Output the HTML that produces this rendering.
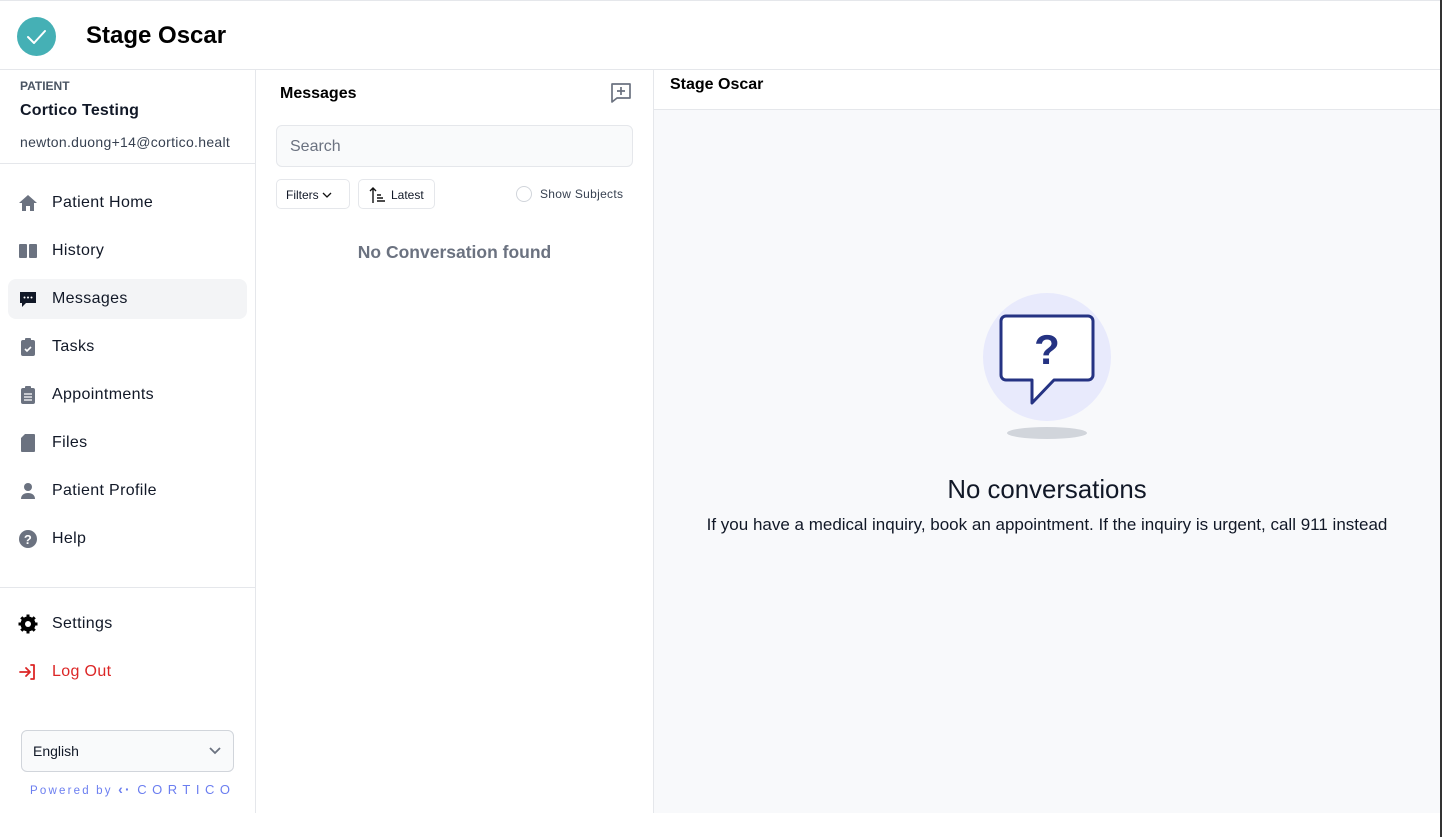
<!DOCTYPE html>
<html><head><meta charset="utf-8"><style>
*{box-sizing:border-box;margin:0;padding:0}
body{width:1442px;height:837px;background:#fff;font-family:"Liberation Sans",Arial,sans-serif;color:#111827;position:relative;overflow:hidden}
.top{position:absolute;left:0;top:0;width:1440px;height:70px;border-top:1px solid #e5e7eb;border-bottom:1px solid #e5e7eb}
.logo{position:absolute;left:17px;top:16px;width:39px;height:39px;border-radius:50%;background:#45b0b5}
.title{position:absolute;left:86px;top:21px;font-size:24px;font-weight:bold;color:#000}
.side{position:absolute;left:0;top:70px;width:256px;height:743px;border-right:1px solid #e5e7eb}
.nav{position:absolute;left:8px;width:239px;height:40px;border-radius:8px;display:flex;align-items:center;font-size:16px;letter-spacing:0.35px;color:#111827}
.nav svg{position:absolute;left:10px}
.nav span{position:absolute;left:44px;top:11px}
.mid{position:absolute;left:256px;top:70px;width:398px;height:743px;border-right:1px solid #e5e7eb}
.right{position:absolute;left:654px;top:70px;width:786px;height:743px;background:#f8f9fb}
.strip{position:absolute;left:1440px;top:0;width:2px;height:837px;background:#333}
</style></head><body>
<div class="top">
<div class="logo"><svg width="39" height="39" viewBox="0 0 39 39"><path d="M11 20l6 6 11-12" stroke="#fff" stroke-width="2" fill="none" stroke-linecap="round" stroke-linejoin="round"/></svg></div>
<div class="title">Stage Oscar</div>
</div>
<div class="side">
<div style="position:absolute;left:20px;top:9px;font-size:12px;font-weight:bold;color:#4b5563">PATIENT</div>
<div style="position:absolute;left:20px;top:32px;font-size:16px;font-weight:bold;letter-spacing:0.2px">Cortico Testing</div>
<div style="position:absolute;left:20px;top:64px;font-size:14px;color:#374151;white-space:nowrap;letter-spacing:0.3px">newton.duong+14@cortico.healt</div>
<div style="position:absolute;left:0;top:93px;width:255px;border-top:1px solid #e5e7eb"></div>
<div class="nav" style="top:113px"><svg width="20" height="20" viewBox="0 0 20 20"><path d="M10 2L1 10h3v8h4v-5h4v5h4v-8h3z" fill="#6b7280"/></svg><span>Patient Home</span></div>
<div class="nav" style="top:161px"><svg width="20" height="20" viewBox="0 0 20 20"><rect x="1" y="3" width="8" height="14" rx="1" fill="#6b7280"/><rect x="11" y="3" width="8" height="14" rx="1" fill="#6b7280"/></svg><span>History</span></div>
<div class="nav" style="top:209px;background:#f3f4f6"><svg width="20" height="20" viewBox="0 0 20 20"><path d="M2 3h16v11H8l-4 4v-4H2z" fill="#111827"/><circle cx="6.5" cy="8.5" r="1" fill="#fff"/><circle cx="10" cy="8.5" r="1" fill="#fff"/><circle cx="13.5" cy="8.5" r="1" fill="#fff"/></svg><span>Messages</span></div>
<div class="nav" style="top:257px"><svg width="20" height="20" viewBox="0 0 20 20"><rect x="3" y="3" width="14" height="16" rx="2" fill="#6b7280"/><rect x="7" y="1" width="6" height="4" rx="1" fill="#6b7280"/><path d="M7 12l2 2 4-4" stroke="#fff" stroke-width="1.6" fill="none"/></svg><span>Tasks</span></div>
<div class="nav" style="top:305px"><svg width="20" height="20" viewBox="0 0 20 20"><rect x="3" y="3" width="14" height="16" rx="2" fill="#6b7280"/><rect x="7" y="1" width="6" height="4" rx="1" fill="#6b7280"/><path d="M6 9h8M6 12h8M6 15h8" stroke="#fff" stroke-width="1.3"/></svg><span>Appointments</span></div>
<div class="nav" style="top:353px"><svg width="20" height="20" viewBox="0 0 20 20"><path d="M7 1h9a1 1 0 011 1v16a1 1 0 01-1 1H4a1 1 0 01-1-1V5z" fill="#6b7280"/></svg><span>Files</span></div>
<div class="nav" style="top:401px"><svg width="20" height="20" viewBox="0 0 20 20"><circle cx="10" cy="6" r="4" fill="#6b7280"/><path d="M3 18c0-4 3-6 7-6s7 2 7 6z" fill="#6b7280"/></svg><span>Patient Profile</span></div>
<div class="nav" style="top:449px"><svg width="20" height="20" viewBox="0 0 20 20"><circle cx="10" cy="10" r="9" fill="#6b7280"/><text x="10" y="15" font-size="13" font-weight="bold" fill="#fff" text-anchor="middle" font-family="Liberation Sans">?</text></svg><span>Help</span></div>
<div style="position:absolute;left:0;top:517px;width:255px;border-top:1px solid #e5e7eb"></div>
<div class="nav" style="top:534px"><svg width="20" height="20" viewBox="0 0 20 20"><circle cx="10" cy="10" r="7.5" fill="#000"/><g fill="#000"><rect x="8.5" y="0.5" width="3" height="4"/><rect x="8.5" y="15.5" width="3" height="4"/><rect x="0.5" y="8.5" width="4" height="3"/><rect x="15.5" y="8.5" width="4" height="3"/><rect x="8.5" y="0.5" width="3" height="4" transform="rotate(45 10 10)"/><rect x="8.5" y="15.5" width="3" height="4" transform="rotate(45 10 10)"/><rect x="0.5" y="8.5" width="4" height="3" transform="rotate(45 10 10)"/><rect x="15.5" y="8.5" width="4" height="3" transform="rotate(45 10 10)"/></g><circle cx="10" cy="10" r="3" fill="#fff"/></svg><span>Settings</span></div>
<div class="nav" style="top:582px;color:#dc2626"><svg width="20" height="20" viewBox="0 0 20 20"><path d="M2 10h10M8 6l4 4-4 4M13 3h3v14h-3" stroke="#dc2626" stroke-width="1.8" fill="none" stroke-linecap="round" stroke-linejoin="round"/></svg><span>Log Out</span></div>
<div style="position:absolute;left:21px;top:660px;width:213px;height:42px;border:1px solid #d1d5db;border-radius:6px;background:#f9fafb;font-size:14px;padding:12px 0 0 11px">English<svg style="position:absolute;right:12px;top:16px" width="12" height="8" viewBox="0 0 12 8"><path d="M1 1l5 5 5-5" stroke="#6b7280" stroke-width="1.8" fill="none"/></svg></div>
<div style="position:absolute;left:30px;top:711px;font-size:11.5px;letter-spacing:2.2px;color:#6b7ef0;white-space:nowrap">Powered by <span style="font-weight:bold;font-size:14px">‹·</span> <span style="letter-spacing:5.5px;font-size:13px">CORTICO</span></div>
</div>
<div class="mid">
<div style="position:absolute;left:24px;top:15px;font-size:16px;font-weight:bold;color:#000">Messages</div>
<svg style="position:absolute;left:354px;top:12px" width="22" height="22" viewBox="0 0 22 22"><path d="M2 2h18v14H7l-5 4z" stroke="#6b7280" stroke-width="1.7" fill="none" stroke-linejoin="round"/><path d="M11 5v8M7 9h8" stroke="#6b7280" stroke-width="1.7"/></svg>
<div style="position:absolute;left:20px;top:55px;width:357px;height:42px;border:1px solid #e5e7eb;border-radius:6px;background:#f9fafb;font-size:16px;color:#6b7280;padding:12px 0 0 13px">Search</div>
<div style="position:absolute;left:20px;top:109px;width:74px;height:30px;border:1px solid #e5e7eb;border-radius:5px;font-size:12px;padding:8px 0 0 9px">Filters <svg width="10" height="7" viewBox="0 0 10 7"><path d="M1 1l4 4 4-4" stroke="#111" stroke-width="1.3" fill="none"/></svg></div>
<div style="position:absolute;left:102px;top:109px;width:77px;height:30px;border:1px solid #e5e7eb;border-radius:5px;font-size:12px;padding:8px 0 0 32px">Latest<svg style="position:absolute;left:9px;top:5px" width="20" height="20" viewBox="0 0 20 20"><path d="M5 18V3M2 6l3-3 3 3M9 10h4M9 13h6M9 16h8" stroke="#111" stroke-width="1.4" fill="none"/></svg></div>
<div style="position:absolute;left:260px;top:116px;width:16px;height:16px;border:1px solid #d1d5db;border-radius:50%"></div>
<div style="position:absolute;left:284px;top:117px;font-size:12px;color:#374151;letter-spacing:0.3px">Show Subjects</div>
<div style="position:absolute;left:0;width:397px;top:172px;text-align:center;font-size:17.5px;font-weight:bold;color:#6b7280">No Conversation found</div>
</div>
<div class="right">
<div style="position:absolute;left:0;top:0;width:786px;height:40px;background:#fff;border-bottom:1px solid #e5e7eb;font-size:16px;font-weight:bold;color:#000;padding:6px 0 0 16px">Stage Oscar</div>
<svg style="position:absolute;left:328px;top:222px" width="130" height="150" viewBox="0 0 130 150"><circle cx="65" cy="65" r="64" fill="#e8eafc"/><ellipse cx="65" cy="141" rx="40" ry="6" fill="#d1d5db"/><path d="M24 24h82a5 5 0 015 5v54a5 5 0 01-5 5H72l-22 23V88H24a5 5 0 01-5-5V29a5 5 0 015-5z" fill="#fff" stroke="#253383" stroke-width="3" stroke-linejoin="round"/><text x="65" y="72" font-size="42" font-weight="bold" fill="#253383" text-anchor="middle" font-family="Liberation Sans">?</text></svg>
<div style="position:absolute;left:0;width:786px;top:406px;text-align:center;font-size:25.8px;color:#111827">No conversations</div>
<div style="position:absolute;left:0;width:786px;top:445px;text-align:center;font-size:17px;color:#111827">If you have a medical inquiry, book an appointment. If the inquiry is urgent, call 911 instead</div>
</div>
<div class="strip"></div>
</body></html>
